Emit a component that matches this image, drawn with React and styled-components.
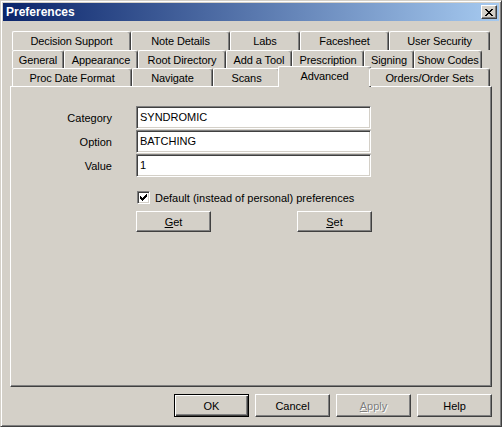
import React from 'react'
import styled, { createGlobalStyle } from 'styled-components'

const GlobalStyle = createGlobalStyle`
  html, body {
    margin: 0;
    padding: 0;
    background: #d4d0c8;
  }
  body {
    font-family: 'Liberation Sans', Arial, sans-serif;
    font-size: 11px;
    color: #000;
  }
`

const StyledWindow = styled.div`
  box-sizing: border-box;
  width: 502px;
  height: 427px;
  display: flex;
  flex-direction: column;
  background: #d4d0c8;
  border: 1px solid;
  border-color: #d4d0c8 #404040 #404040 #d4d0c8;
  box-shadow: inset 1px 1px #fff, inset -1px -1px #808080;
  padding: 2px;
`

const StyledTitleBar = styled.div`
  height: 18px;
  flex: none;
  display: flex;
  align-items: center;
  justify-content: space-between;
  padding: 0 2px 0 3px;
  background: linear-gradient(to right, #0a246a, #a6caf0);
  color: #fff;
  font-weight: bold;
  font-size: 12px;
`

const StyledCloseButton = styled.div`
  box-sizing: border-box;
  width: 16px;
  height: 14px;
  display: flex;
  align-items: center;
  justify-content: center;
  background: #d4d0c8;
  border: 1px solid;
  border-color: #fff #404040 #404040 #fff;
  box-shadow: inset -1px -1px #808080;
`

const StyledBody = styled.div`
  flex: 1;
  display: flex;
  flex-direction: column;
  padding: 10px 7px 7px 7px;
  min-height: 0;
`

const StyledTabStrip = styled.div`
  display: flex;
  flex-direction: column;
  padding: 0 2px;
  position: relative;
  z-index: 1;
`

const StyledTabRow = styled.div`
  display: flex;
  height: ${(p) => p.$h}px;
`

const StyledTab = styled.div`
  box-sizing: border-box;
  flex: none;
  width: ${(p) => (p.$active ? p.$w + 4 : p.$w)}px;
  height: ${(p) => (p.$active ? p.$h + 3 : p.$h)}px;
  margin: ${(p) => (p.$active ? '-2px -2px -1px -2px' : '0')};
  display: flex;
  align-items: ${(p) => (p.$active ? 'flex-start' : 'center')};
  padding-top: ${(p) => (p.$active ? '3px' : '0')};
  justify-content: center;
  background: #d4d0c8;
  border-top: 1px solid #fff;
  border-left: 1px solid #fff;
  border-right: 1px solid #404040;
  border-radius: 2px 3px 0 0;
  box-shadow: inset -1px 0 #808080;
  white-space: nowrap;
  letter-spacing: -0.1px;
`

const StyledPanel = styled.div`
  flex: 1;
  box-sizing: border-box;
  border: 1px solid;
  border-color: #fff #404040 #404040 #fff;
  box-shadow: inset -1px -1px #808080;
  padding-top: 19px;
`

const StyledForm = styled.div`
  display: grid;
  grid-template-columns: 101px 235px;
  column-gap: 24px;
  row-gap: 1px;
  grid-auto-rows: 23px;
  align-items: center;
`

const StyledLabel = styled.label`
  text-align: right;
`

const StyledInput = styled.div`
  box-sizing: border-box;
  height: 23px;
  background: #fff;
  border: 1px solid;
  border-color: #808080 #fff #fff #808080;
  box-shadow: inset 1px 1px #404040, inset -1px -1px #d4d0c8;
  padding: 4px 3px 0;
  color: #000;
`

const StyledOptions = styled.div`
  margin: 14px 0 0 125px;
  width: 236px;
  display: flex;
  flex-direction: column;
  gap: 7px;
`

const StyledCheckRow = styled.div`
  display: flex;
  align-items: center;
  gap: 5px;
  padding-left: 1px;
`

const StyledCheckbox = styled.div`
  box-sizing: border-box;
  width: 13px;
  height: 13px;
  background: #fff;
  border: 1px solid;
  border-color: #808080 #fff #fff #808080;
  box-shadow: inset 1px 1px #404040, inset -1px -1px #d4d0c8;
  display: flex;
  align-items: center;
  justify-content: center;
`

const StyledButtonRow = styled.div`
  display: flex;
  justify-content: ${(p) => p.$justify || 'flex-start'};
  gap: 6px;
  padding: ${(p) => p.$pad || '0'};
`

const StyledButton = styled.button`
  box-sizing: border-box;
  width: 75px;
  height: ${(p) => p.$h || 23}px;
  font-family: inherit;
  font-size: 11px;
  color: ${(p) => (p.disabled ? '#808080' : '#000')};
  text-shadow: ${(p) => (p.disabled ? '1px 1px #fff' : 'none')};
  background: #d4d0c8;
  border: 1px solid;
  border-color: ${(p) => (p.$default ? '#000' : '#fff #404040 #404040 #fff')};
  box-shadow: ${(p) =>
    p.$default
      ? 'inset 1px 1px #fff, inset -1px -1px #404040, inset -2px -2px #808080'
      : 'inset -1px -1px #808080, inset 1px 1px #d4d0c8'};
  padding: 0;
  u {
    text-decoration: underline;
  }
`

const tabRows = [
  [
    ['Decision Support', 119],
    ['Note Details', 99],
    ['Labs', 70],
    ['Facesheet', 89],
    ['User Security', 101],
  ],
  [
    ['General', 52],
    ['Appearance', 74],
    ['Root Directory', 88],
    ['Add a Tool', 66],
    ['Prescription', 72],
    ['Signing', 50],
    ['Show Codes', 68],
  ],
  [
    ['Proc Date Format', 120],
    ['Navigate', 81],
    ['Scans', 67],
    ['Advanced', 89],
    ['Orders/Order Sets', 121],
  ],
]

const rowHeights = [19, 18, 18]

const fields = [
  ['Category', 'SYNDROMIC'],
  ['Option', 'BATCHING'],
  ['Value', '1'],
]

const App = () => {
  return (
    <>
      <GlobalStyle />
      <StyledWindow>
        <StyledTitleBar>
          <span>Preferences</span>
          <StyledCloseButton>
            <svg width="8" height="7" viewBox="0 0 8 7" shapeRendering="crispEdges">
              <path d="M0 0h2v1H0zM6 0h2v1H6zM1 1h2v1H1zM5 1h2v1H5zM2 2h4v1H2zM3 3h2v1H3zM2 4h4v1H2zM1 5h2v1H1zM5 5h2v1H5zM0 6h2v1H0zM6 6h2v1H6z" fill="#000" />
            </svg>
          </StyledCloseButton>
        </StyledTitleBar>
        <StyledBody>
          <StyledTabStrip>
            {tabRows.map((row, i) => (
              <StyledTabRow key={i} $h={rowHeights[i]}>
                {row.map(([name, w]) => (
                  <StyledTab key={name} $w={w} $h={rowHeights[i]} $active={name === 'Advanced'}>
                    {name}
                  </StyledTab>
                ))}
              </StyledTabRow>
            ))}
          </StyledTabStrip>
          <StyledPanel>
            <StyledForm>
              {fields.map(([label, value]) => (
                <React.Fragment key={label}>
                  <StyledLabel>{label}</StyledLabel>
                  <StyledInput>{value}</StyledInput>
                </React.Fragment>
              ))}
            </StyledForm>
            <StyledOptions>
              <StyledCheckRow>
                <StyledCheckbox>
                  <svg width="7" height="7" viewBox="0 0 7 7" shapeRendering="crispEdges">
                    <path d="M6 0h1v3H6zM5 1h1v3H5zM4 2h1v3H4zM3 3h1v3H3zM2 4h1v3H2zM1 3h1v3H1zM0 2h1v3H0z" fill="#000" />
                  </svg>
                </StyledCheckbox>
                <span>Default (instead of personal) preferences</span>
              </StyledCheckRow>
              <StyledButtonRow $justify="space-between">
                <StyledButton $h={21}>
                  <u>G</u>et
                </StyledButton>
                <StyledButton $h={21}>
                  <u>S</u>et
                </StyledButton>
              </StyledButtonRow>
            </StyledOptions>
          </StyledPanel>
          <StyledButtonRow $justify="flex-end" $pad="7px 0 0 0">
            <StyledButton $default>OK</StyledButton>
            <StyledButton>Cancel</StyledButton>
            <StyledButton disabled>
              <u>A</u>pply
            </StyledButton>
            <StyledButton>Help</StyledButton>
          </StyledButtonRow>
        </StyledBody>
      </StyledWindow>
    </>
  )
}

export default App
